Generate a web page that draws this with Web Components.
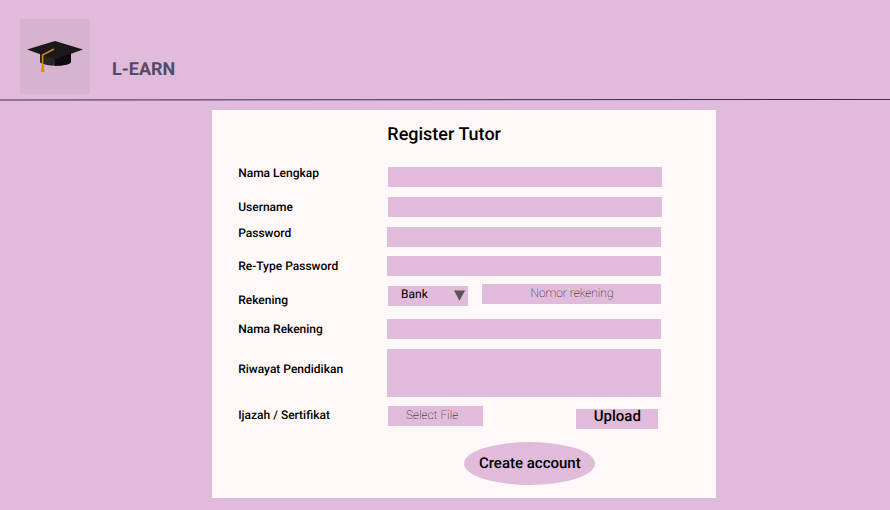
<!DOCTYPE html>
<html lang="id">
<head>
<meta charset="utf-8">
<title>L-EARN – Register Tutor</title>
<style>
html,body{margin:0;height:100%}
body{background:#e0bbda;font-family:Roboto,"Liberation Sans",sans-serif;color:#000;overflow:hidden;text-rendering:geometricPrecision}
</style>
</head>
<body>
<learn-page></learn-page>
<script>
const define = (name, html) => {
  const t = document.createElement('template');
  t.innerHTML = html;
  customElements.define(name, class extends HTMLElement {
    constructor() {
      super();
      this.attachShadow({ mode: 'open' }).append(t.content.cloneNode(true));
    }
  });
};

define('learn-logo', `
<style>
:host{display:block;width:70px;height:75px;background:#d6b4d0}
svg{display:block}
</style>
<svg width="70" height="75" viewBox="0 0 70 75">
  <path d="M20 33V43.5Q24 46.6 35.5 46.8T51 43.5V33Z" fill="#29252b"/>
  <path d="M35 39L51 34V43.5Q48 46.4 35 46.8Z" fill="#0c0a0d"/>
  <path d="M7 30.5L35 22L63 30.5L35 40.5Z" fill="#1b171b"/>
  <path d="M34 30L22.6 36V47" fill="none" stroke="#cf841c" stroke-width="1.5"/>
  <path d="M21.8 46h1.9l1 7h-3.8z" fill="#e08a10"/>
</svg>`);

define('learn-header', `
<style>
:host{display:block;height:110px}
.bar{display:flex;height:99px;box-sizing:border-box;padding:19px 0 0 20px;gap:22px}
h1{margin:40px 0 0;font-size:18px;line-height:21px;font-weight:700;color:#544a66;white-space:nowrap}
svg{display:block}
</style>
<div class="bar"><slot name="logo"></slot><h1><slot></slot></h1></div>
<svg width="890" height="2" viewBox="0 0 890 2"><path d="M0 1L890 .45" stroke="#3d2167" stroke-width="1"/></svg>`);

define('form-card', `
<style>
:host{display:block;box-sizing:border-box;width:504px;height:388px;margin-left:212px;padding:14px 0 0 26px;background:#fef8f8}
h2{margin:0 0 22px 149.3px;font-size:18px;line-height:21px;font-weight:500;white-space:nowrap}
</style>
<h2><slot name="title"></slot></h2><slot></slot>`);

define('form-row', `
<style>
:host{display:flex;height:var(--h,30px)}
label{display:block;width:var(--x,150px);flex:none;padding:var(--ly,0px) 0 0 .2px;font-size:12px;line-height:12px;font-weight:500;white-space:nowrap;box-sizing:border-box}
</style>
<label><slot name="label"></slot></label><slot></slot>`);

define('form-field', `
<style>
:host{display:block;flex:none;box-sizing:border-box;width:274px;height:20px;background:#e0bbda;font-size:12px;line-height:14px;white-space:nowrap}
:host([hint]){font-weight:100;color:#000}
</style>
<slot></slot>`);

define('bank-select', `
<style>
:host{display:flex;flex:none;box-sizing:border-box;width:80px;height:20px;padding:1px 3px 0 13px;justify-content:space-between;background:#e0bbda;font-size:12px;line-height:14px}
svg{display:block;margin-top:3px}
</style>
<slot></slot><svg width="11" height="11" viewBox="0 0 11 11"><path d="M0 0.5H11L5.5 10.8Z" fill="#5b5158"/></svg>`);

define('form-button', `
<style>
:host{display:flex;flex:none;justify-content:center}
button{display:block;box-sizing:border-box;width:var(--w);height:var(--bh);padding:0 0 0 .6px;border:0;border-radius:var(--r,0);background:#e0bbda;font:500 15px/var(--lh) Roboto,"Liberation Sans",sans-serif;text-rendering:inherit;color:#000;white-space:nowrap;text-align:center}
span{display:block;height:var(--bh)}
</style>
<button><span><slot></slot></span></button>`);

define('learn-page', `
<style>:host{display:block}</style>
<learn-header><learn-logo slot="logo"></learn-logo>L-EARN</learn-header>
<form-card>
  <span slot="title">Register Tutor</span>
  <form-row><span slot="label">Nama Lengkap</span><form-field></form-field></form-row>
  <form-row style="--ly:4px"><span slot="label">Username</span><form-field></form-field></form-row>
  <form-row style="--x:149px;--h:29px"><span slot="label">Password</span><form-field></form-field></form-row>
  <form-row style="--x:149px;--h:28px;--ly:4px"><span slot="label">Re-Type Password</span><form-field></form-field></form-row>
  <form-row style="--h:35px;--ly:10px"><span slot="label">Rekening</span><bank-select style="margin-top:2px">Bank</bank-select><form-field hint style="width:179px;margin-left:14px;padding:2px 0 0 48.4px">Nomor rekening</form-field></form-row>
  <form-row style="--x:149px;--ly:4px"><span slot="label">Nama Rekening</span><form-field></form-field></form-row>
  <form-row style="--x:149px;--h:57px;--ly:14px"><span slot="label">Riwayat Pendidikan</span><form-field style="height:48px"></form-field></form-row>
  <form-row style="--h:36px;--ly:3px"><span slot="label">Ijazah / Sertifikat</span><form-field hint style="width:95px;padding:2px 0 0 18px">Select File</form-field><form-button style="--w:82px;--bh:20px;--lh:14px;margin:3px 0 0 93px">Upload</form-button></form-row>
  <form-button style="--w:131px;--bh:43px;--lh:42px;--r:50%;width:131px;margin-left:226px">Create account</form-button>
</form-card>`);
</script>
</body>
</html>
